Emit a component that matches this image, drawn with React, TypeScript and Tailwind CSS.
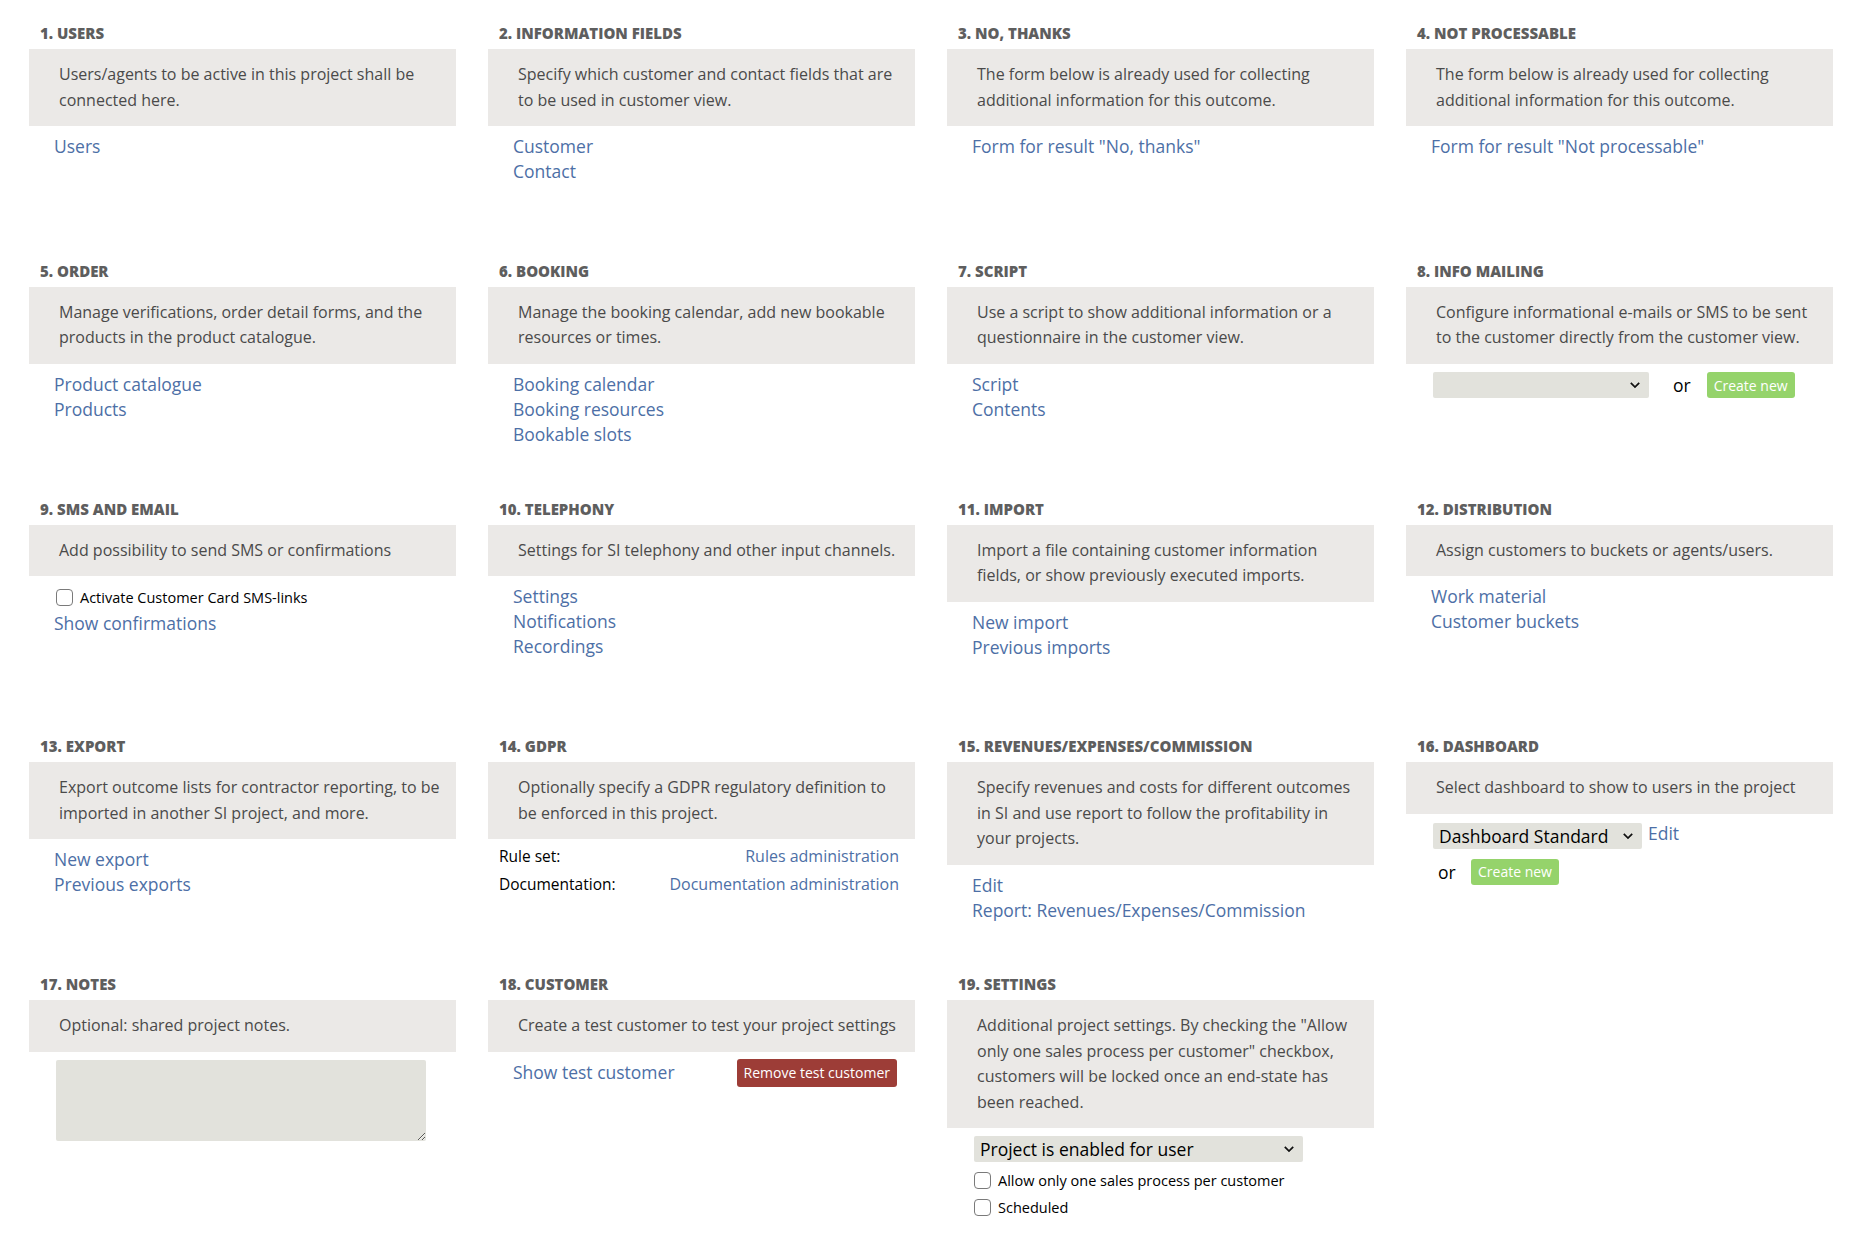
import type { ReactNode } from 'react'

const linkCls = 'block w-fit text-[17.5px] leading-[25px] text-[#4d6fa6] hover:underline'

function Section({
  title,
  text,
  children,
}: {
  title: string
  text: ReactNode
  children?: ReactNode
}) {
  return (
    <div className="flex flex-col">
      <h2 className="pl-[11px] text-[15px] font-extrabold uppercase leading-[20px] text-[#5e5e5e]">
        {title}
      </h2>
      <p className="mt-[6px] bg-[#ebe9e7] py-[13px] pl-[30px] pr-[16px] text-[16px] leading-[25.6px] text-[#4a4a4a]">
        {text}
      </p>
      <div className="mt-[8px]">{children}</div>
    </div>
  )
}

function Links({ items }: { items: string[] }) {
  return (
    <div className="pl-[25px]">
      {items.map((item) => (
        <a key={item} href="#" className={linkCls}>
          {item}
        </a>
      ))}
    </div>
  )
}

function Chevron() {
  return (
    <svg
      viewBox="0 0 12 8"
      className="pointer-events-none absolute right-[8px] top-1/2 h-[7px] w-[12px] -translate-y-1/2"
    >
      <path d="M1.2 1.5 6 6.3 10.8 1.5" fill="none" stroke="#111" strokeWidth="2" />
    </svg>
  )
}

function Select({ value, width }: { value: string; width: string }) {
  return (
    <div className={`relative ${width}`}>
      <select
        defaultValue={value}
        className="h-[26px] w-full appearance-none rounded-[2px] bg-[#e2e2dc] pl-[6px] pr-[28px] text-[17.5px] leading-[26px] text-black outline-none"
      >
        <option value={value}>{value}</option>
      </select>
      <Chevron />
    </div>
  )
}

function Check({ label }: { label: string }) {
  return (
    <label className="flex h-[27px] items-center gap-[7px] text-[14.5px] text-black">
      <input
        type="checkbox"
        className="h-[17px] w-[17px] appearance-none rounded-[4px] border border-[#7a7a7a] bg-white"
      />
      {label}
    </label>
  )
}

function GreenButton() {
  return (
    <button className="h-[26px] rounded-[3px] bg-[#95d36b] px-[7px] text-[14px] text-white">
      Create new
    </button>
  )
}

export default function App() {
  return (
    <div className="min-h-screen bg-white pl-[29px] pt-[23px] font-['Open_Sans',sans-serif]">
      <div className="grid auto-rows-[237.75px] grid-cols-[repeat(4,427px)] gap-x-[32px]">
        <Section
          title="1. Users"
          text="Users/agents to be active in this project shall be connected here."
        >
          <Links items={['Users']} />
        </Section>
        <Section
          title="2. Information fields"
          text="Specify which customer and contact fields that are to be used in customer view."
        >
          <Links items={['Customer', 'Contact']} />
        </Section>
        <Section
          title="3. No, thanks"
          text="The form below is already used for collecting additional information for this outcome."
        >
          <Links items={['Form for result "No, thanks"']} />
        </Section>
        <Section
          title="4. Not processable"
          text="The form below is already used for collecting additional information for this outcome."
        >
          <Links items={['Form for result "Not processable"']} />
        </Section>

        <Section
          title="5. Order"
          text="Manage verifications, order detail forms, and the products in the product catalogue."
        >
          <Links items={['Product catalogue', 'Products']} />
        </Section>
        <Section
          title="6. Booking"
          text="Manage the booking calendar, add new bookable resources or times."
        >
          <Links items={['Booking calendar', 'Booking resources', 'Bookable slots']} />
        </Section>
        <Section
          title="7. Script"
          text="Use a script to show additional information or a questionnaire in the customer view."
        >
          <Links items={['Script', 'Contents']} />
        </Section>
        <Section
          title="8. Info mailing"
          text="Configure informational e-mails or SMS to be sent to the customer directly from the customer view."
        >
          <div className="flex items-center pl-[27px]">
            <Select value="" width="w-[216px]" />
            <span className="ml-[24px] text-[17.5px] text-black">or</span>
            <span className="ml-[16px]">
              <GreenButton />
            </span>
          </div>
        </Section>

        <Section title="9. SMS and Email" text="Add possibility to send SMS or confirmations">
          <div className="pl-[27px]">
            <Check label="Activate Customer Card SMS-links" />
          </div>
          <Links items={['Show confirmations']} />
        </Section>
        <Section
          title="10. Telephony"
          text="Settings for SI telephony and other input channels."
        >
          <Links items={['Settings', 'Notifications', 'Recordings']} />
        </Section>
        <Section
          title="11. Import"
          text="Import a file containing customer information fields, or show previously executed imports."
        >
          <Links items={['New import', 'Previous imports']} />
        </Section>
        <Section
          title="12. Distribution"
          text="Assign customers to buckets or agents/users."
        >
          <Links items={['Work material', 'Customer buckets']} />
        </Section>

        <Section
          title="13. Export"
          text="Export outcome lists for contractor reporting, to be imported in another SI project, and more."
        >
          <Links items={['New export', 'Previous exports']} />
        </Section>
        <Section
          title="14. GDPR"
          text="Optionally specify a GDPR regulatory definition to be enforced in this project."
        >
          <div className="-mt-[5px] grid grid-cols-[auto_1fr] pl-[11px] pr-[16px] text-[15.5px] leading-[28px]">
            <span className="text-black">Rule set:</span>
            <a href="#" className="justify-self-end text-[16px] text-[#4d6fa6]">
              Rules administration
            </a>
            <span className="text-black">Documentation:</span>
            <a href="#" className="justify-self-end text-[16px] text-[#4d6fa6]">
              Documentation administration
            </a>
          </div>
        </Section>
        <Section
          title="15. Revenues/Expenses/Commission"
          text="Specify revenues and costs for different outcomes in SI and use report to follow the profitability in your projects."
        >
          <Links items={['Edit', 'Report: Revenues/Expenses/Commission']} />
        </Section>
        <Section
          title="16. Dashboard"
          text="Select dashboard to show to users in the project"
        >
          <div className="pl-[27px] pt-[1px]">
            <div className="flex items-start">
              <Select value="Dashboard Standard" width="w-[209px]" />
              <a href="#" className="ml-[6px] text-[17.5px] leading-[20px] text-[#4d6fa6]">
                Edit
              </a>
            </div>
            <div className="mt-[10px] flex items-center">
              <span className="ml-[5px] w-[33px] text-[17.5px] text-black">or</span>
              <GreenButton />
            </div>
          </div>
        </Section>

        <Section title="17. Notes" text="Optional: shared project notes.">
          <div className="pl-[27px]">
            <textarea className="block h-[81px] w-[370px] rounded-[2px] bg-[#e2e2dc] outline-none" />
          </div>
        </Section>
        <Section
          title="18. Customer"
          text="Create a test customer to test your project settings"
        >
          <div className="-mt-[1px] flex items-center justify-between pl-[25px] pr-[18px]">
            <a href="#" className="text-[17.5px] leading-[25px] text-[#4d6fa6]">
              Show test customer
            </a>
            <button className="h-[28px] rounded-[3px] bg-[#9d3d37] px-[7px] text-[14px] text-white">
              Remove test customer
            </button>
          </div>
        </Section>
        <Section
          title="19. Settings"
          text={
            'Additional project settings. By checking the "Allow only one sales process per customer" checkbox, customers will be locked once an end-state has been reached.'
          }
        >
          <div className="pl-[27px]">
            <Select value="Project is enabled for user" width="w-[329px]" />
            <div className="mt-[5px]">
              <Check label="Allow only one sales process per customer" />
              <Check label="Scheduled" />
            </div>
          </div>
        </Section>
      </div>
    </div>
  )
}
